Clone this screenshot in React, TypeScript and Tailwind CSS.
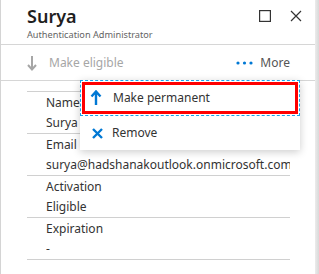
import React from "react";

const font = { fontFamily: '"Segoe UI", "Noto Sans", "Open Sans", sans-serif' };

const rows = [
  { label: "Name", value: "Surya" },
  { label: "Email", value: "surya@hadshanakoutlook.onmicrosoft.com" },
  { label: "Activation", value: "Eligible" },
  { label: "Expiration", value: "-" },
];

const App = () => {
  return (
    <div className="w-[319px] h-[274px] flex bg-white overflow-hidden relative" style={font}>
      {/* left edge */}
      <div className="w-px bg-[#d4d4d4]" />

      <div className="flex-1 flex flex-col">
        {/* Header */}
        <div className="h-[45px] border-b border-[#d6d6d6] flex items-start justify-between pl-[26px] pr-[13px] pt-[4px]">
          <div>
            <div className="text-[18px] leading-[24px] font-semibold text-[#1f1f1f]">Surya</div>
            <div className="text-[9.2px] leading-[12px] text-[#646464] mt-[1px]">Authentication Administrator</div>
          </div>
          <div className="flex items-center gap-[19px] mt-[6px]">
            <svg width="12" height="12" viewBox="0 0 12 12">
              <rect x="0.6" y="0.6" width="10.8" height="10.8" fill="none" stroke="#333" strokeWidth="1.2" />
            </svg>
            <svg width="12" height="12" viewBox="0 0 12 12">
              <path d="M1 1L11 11M11 1L1 11" stroke="#333" strokeWidth="1.2" />
            </svg>
          </div>
        </div>

        {/* Toolbar */}
        <div className="h-[36px] border-b border-[#d6d6d6] flex items-center justify-between pl-[26px] pr-[25px]">
          <div className="flex items-center gap-[12px] text-[#a6a6a6] text-[12px]">
            <svg width="10" height="16" viewBox="0 0 10 16">
              <path d="M5 1V14M1 10L5 14.5L9 10" fill="none" stroke="#a6a6a6" strokeWidth="2" />
            </svg>
            <span>Make eligible</span>
          </div>
          <div className="flex items-center gap-[7px] text-[12px] text-[#555]">
            <svg width="17" height="4" viewBox="0 0 17 4">
              <circle cx="2" cy="2" r="1.6" fill="#0078d4" />
              <circle cx="8.5" cy="2" r="1.6" fill="#0078d4" />
              <circle cx="15" cy="2" r="1.6" fill="#0078d4" />
            </svg>
            <span>More</span>
          </div>
        </div>

        {/* Details */}
        <div className="mt-[10px] ml-[26px] w-[263px] border-b border-[#d0d0d0]">
          {rows.map((r) => (
            <div key={r.label} className="border-t border-[#d0d0d0] pt-[1px] pl-[19px] text-[12px] text-[#333]">
              <div className="h-[20px] leading-[20px]">{r.label}</div>
              <div className="h-[20px] leading-[20px] whitespace-nowrap overflow-hidden">{r.value}</div>
            </div>
          ))}
        </div>
      </div>

      {/* right scroll edge */}
      <div className="w-[4px] bg-gradient-to-r from-[#ececec] to-[#d8d8d8]" />

      {/* Dropdown menu */}
      <div className="absolute left-[80px] top-[80px] w-[220px] h-[70px] bg-white shadow-[0_2px_8px_rgba(0,0,0,0.2)] flex flex-col text-[12px] text-[#333]">
        <div className="h-[36px] border border-dashed border-[#1aa3e8] p-px">
          <div className="h-full border-[3px] border-[#ff0000] flex items-center pl-[5px] gap-[11px]">
            <svg width="12" height="16" viewBox="0 0 12 16">
              <path d="M6 15V2M1.5 6.5L6 1.5L10.5 6.5" fill="none" stroke="#0078d4" strokeWidth="2.4" />
            </svg>
            <span>Make permanent</span>
          </div>
        </div>
        <div className="flex-1 flex items-center pl-[12px] gap-[9px]">
          <svg width="11" height="11" viewBox="0 0 11 11">
            <path d="M1 1L10 10M10 1L1 10" stroke="#0078d4" strokeWidth="2.4" />
          </svg>
          <span>Remove</span>
        </div>
      </div>
    </div>
  );
};

export default App;
